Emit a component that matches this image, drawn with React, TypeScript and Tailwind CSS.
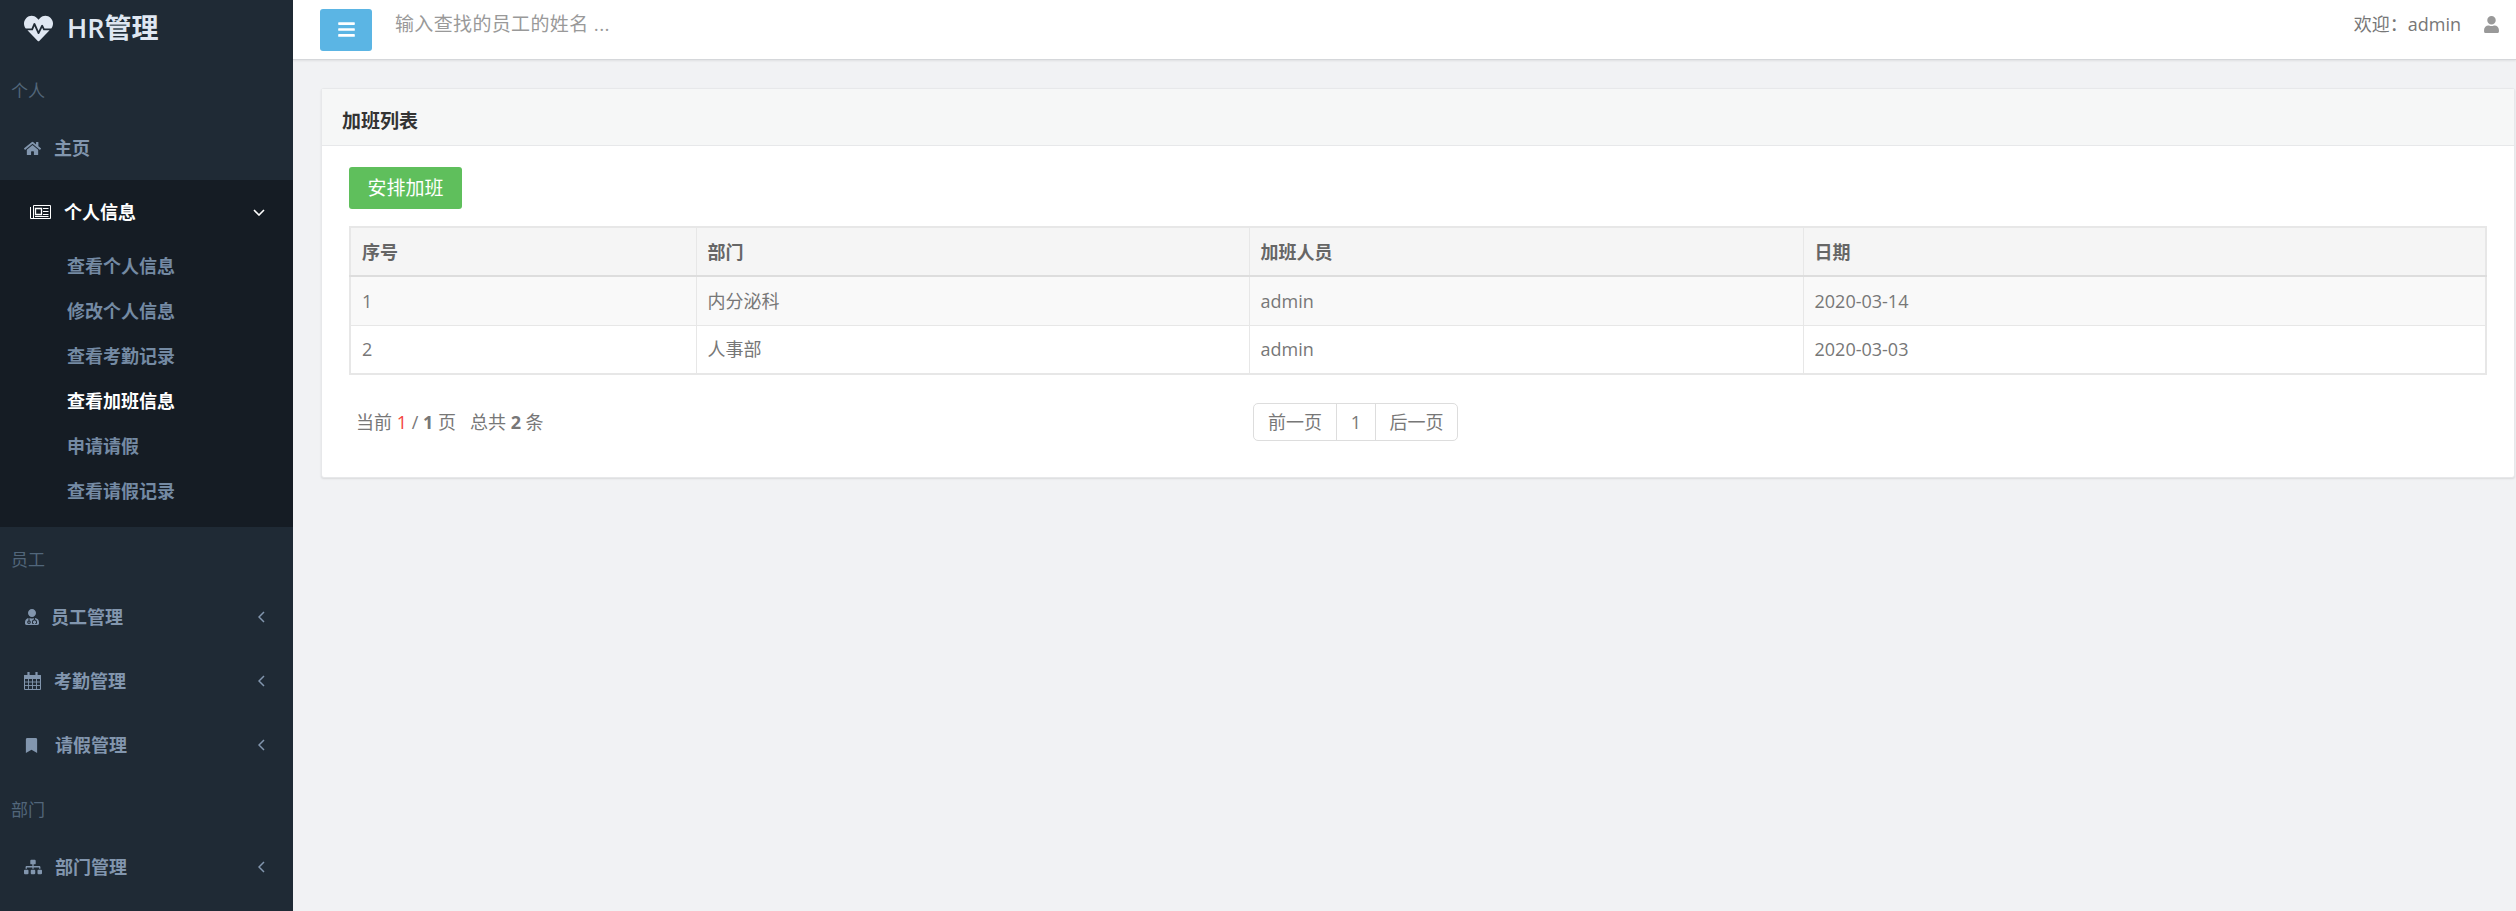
import React from "react";
import { FaHeartbeat, FaHome, FaUserMd, FaBookmark, FaSitemap, FaUser, FaBars } from "react-icons/fa";

const font = { fontFamily: '"Open Sans","Noto Sans CJK SC",sans-serif' };

function AngleLeft() {
  return (
    <svg viewBox="0 0 7 12" className="ml-auto h-[12px] w-[7px]" fill="none" stroke="currentColor" strokeWidth="1.5">
      <path d="M6 1 1 6l5 5" />
    </svg>
  );
}

function AngleDown() {
  return (
    <svg viewBox="0 0 12 7" className="ml-auto h-[7px] w-[12px]" fill="none" stroke="currentColor" strokeWidth="1.6">
      <path d="M1 1l5 5 5-5" />
    </svg>
  );
}

function CalendarIcon() {
  return (
    <svg viewBox="0 0 17 18" className="h-[18px] w-[17px]" fill="none" stroke="currentColor">
      <path d="M.5 3.5h16v14H.5z" />
      <path d="M.5 3.5h16v3H.5z" fill="currentColor" />
      <path d="M.5 10h16M.5 13.5h16M4.5 6v11M8.5 6v11M12.5 6v11" strokeWidth="0.9" />
      <path d="M4.5 0v4M12.5 0v4" strokeWidth="2.2" />
    </svg>
  );
}

function NewspaperIcon() {
  return (
    <svg viewBox="0 0 21 14" className="h-[14px] w-[21px]" fill="none" stroke="currentColor">
      <path d="M.5 2v11.5h20V.5h-17v13" />
      <path d="M5.5 3.5h6v6h-6z" strokeWidth="1.3" />
      <path d="M13 3.5h5.5M13 6.5h5.5M13 9.5h5.5M5 11.5h13.5" strokeWidth="1.2" />
    </svg>
  );
}

function Label({ children }: { children: React.ReactNode }) {
  return <div className="h-[58px] pl-[11px] pt-[21px] text-[17px] leading-[24px] font-normal text-[#52667a]">{children}</div>;
}

function Item({ icon, text, gap, arrow = true }: { icon: React.ReactNode; text: string; gap: string; arrow?: boolean }) {
  return (
    <div className="flex h-16 items-center pl-[24px] pr-[28px] text-[18px] font-bold text-[#8296ae]">
      <span className={`flex items-center ${gap}`}>{icon}</span>
      <span>{text}</span>
      {arrow && <AngleLeft />}
    </div>
  );
}

const subs = ["查看个人信息", "修改个人信息", "查看考勤记录", "查看加班信息", "申请请假", "查看请假记录"];

const rows = [
  ["1", "内分泌科", "admin", "2020-03-14"],
  ["2", "人事部", "admin", "2020-03-03"],
];

export default function App() {
  return (
    <div style={font} className="flex h-screen overflow-hidden bg-[#f1f2f4] text-[18px] text-[#777]">
      <aside className="h-full w-[293px] shrink-0 overflow-hidden bg-[#1f2a35]">
        <div className="flex h-[58px] items-center pl-[24px] pb-[2px] text-[#dfe7f2]">
          <FaHeartbeat className="mr-[14px] text-[29px]" />
          <span className="text-[27px] font-semibold">HR管理</span>
        </div>
        <Label>个人</Label>
        <Item icon={<FaHome className="text-[17px]" />} text="主页" gap="w-[30px]" arrow={false} />
        <div className="h-[347px] bg-[#151c24]">
          <div className="flex h-[62px] items-center pl-[30px] pr-[28px] pt-[2px] font-bold text-white">
            <span className="mr-[13px]"><NewspaperIcon /></span>
            <span>个人信息</span>
            <AngleDown />
          </div>
          <div className="pt-[2px]">
            {subs.map((s, i) => (
              <div key={s} className={`flex h-[45px] items-center pl-[67px] font-bold ${i === 3 ? "text-white" : "text-[#748aa3]"}`}>{s}</div>
            ))}
          </div>
        </div>
        <Label>员工</Label>
        <Item icon={<FaUserMd className="text-[16px]" />} text="员工管理" gap="w-[27px]" />
        <Item icon={<CalendarIcon />} text="考勤管理" gap="w-[30px]" />
        <Item icon={<FaBookmark className="text-[15px]" />} text="请假管理" gap="w-[31px]" />
        <Label>部门</Label>
        <Item icon={<FaSitemap className="text-[18px]" />} text="部门管理" gap="w-[31px]" />
      </aside>

      <div className="flex min-w-0 flex-1 flex-col">
        <header className="flex h-[60px] shrink-0 items-center border-b border-[#d5d7da] bg-white pl-[27px] pr-[16px] shadow-[0_1px_2px_rgba(0,0,0,0.08)]">
          <button className="flex h-[42px] w-[52px] items-center justify-center rounded-[3px] bg-[#5bb5e4] text-white">
            <FaBars className="text-[19px]" />
          </button>
          <div className="ml-[23px] pb-[10px] text-[19px] tracking-[0.35px] text-[#999]">输入查找的员工的姓名 ...</div>
          <div className="ml-auto flex items-center pb-[10px]">
            <span>欢迎：admin</span>
            <FaUser className="ml-[22px] text-[17px] text-[#999]" />
          </div>
        </header>

        <main className="flex-1 pl-[28px] pr-px pt-[28px]">
          <section className="h-[390px] rounded-[3px] border border-[#e7e8ea] bg-white shadow-[0_1px_2px_rgba(0,0,0,0.1)]">
            <div className="flex h-[57px] items-center border-b border-[#e7e8ea] bg-[#f6f7f7] pl-[20px] pt-[8px] text-[19px] font-semibold text-[#333]">加班列表</div>
            <div className="pl-[27px] pr-[28px] pt-[21px]">
              <button className="h-[42px] w-[113px] rounded-[3px] bg-[#5fbf5c] text-[19px] text-white">安排加班</button>
              <table className="mt-[17px] w-[2138px] table-fixed border-collapse border-2 border-[#e7e7e7]">
                <colgroup>
                  <col className="w-[346px]" />
                  <col className="w-[553px]" />
                  <col className="w-[554px]" />
                  <col />
                </colgroup>
                <thead>
                  <tr className="h-[49px] bg-[#f5f5f5]">
                    {["序号", "部门", "加班人员", "日期"].map((h) => (
                      <th key={h} className="border border-[#e7e7e7] border-b-2 border-b-[#ddd] px-[11px] pt-px text-left font-bold text-[#666]">{h}</th>
                    ))}
                  </tr>
                </thead>
                <tbody>
                  {rows.map((r, i) => (
                    <tr key={r[0]} className={`h-[49px] ${i === 0 ? "bg-[#f9f9f9]" : "bg-white"}`}>
                      {r.map((c, j) => (
                        <td key={j} className="border border-[#e7e7e7] px-[11px] pt-px">{c}</td>
                      ))}
                    </tr>
                  ))}
                </tbody>
              </table>
              <div className="mt-[28px] flex h-[38px] items-center">
                <div className="w-[904px] pl-[7px]">
                  当前 <span className="text-[#f4433a]">1</span> / <b>1</b> 页 &nbsp; 总共 <b>2</b> 条
                </div>
                <div className="flex h-[38px] items-center rounded-[5px] border border-[#ddd]">
                  <span className="flex h-full w-[83px] items-center justify-center border-r border-[#ddd]">前一页</span>
                  <span className="flex h-full w-[39px] items-center justify-center border-r border-[#ddd]">1</span>
                  <span className="flex h-full w-[81px] items-center justify-center">后一页</span>
                </div>
              </div>
            </div>
          </section>
        </main>
      </div>
    </div>
  );
}
